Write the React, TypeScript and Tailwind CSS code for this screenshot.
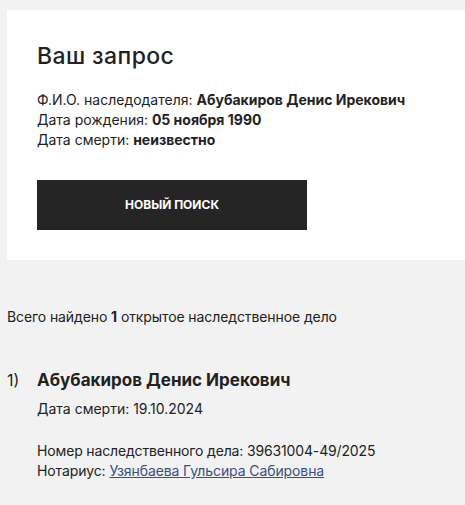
export default function App() {
  const font = { fontFamily: 'Inter, "Liberation Sans", Arial, sans-serif' };
  return (
    <div className="w-[465px] h-[505px] bg-[#f2f2f2] overflow-hidden text-[#222222]" style={font}>
      <div className="ml-[7px] mt-[10px] bg-white pl-[30px] pt-[32px] pb-[30px]">
        <h1 className="text-[23px] leading-[28px] font-medium tracking-[0.4px]">Ваш запрос</h1>
        <div className="mt-[20px] text-[14px] leading-[20px]">
          <div>Ф.И.О. наследодателя: <b>Абубакиров Денис Ирекович</b></div>
          <div>Дата рождения: <b>05 ноября 1990</b></div>
          <div>Дата смерти: <b>неизвестно</b></div>
        </div>
        <button className="mt-[30px] w-[270px] h-[50px] bg-[#252525] text-white text-[12px] font-bold uppercase flex items-center justify-center">
          Новый поиск
        </button>
      </div>
      <div className="ml-[7px] mt-[47px] text-[14px] leading-[20px] tracking-[-0.1px]">
        Всего найдено <b>1</b> открытое наследственное дело
      </div>
      <div className="mt-[41px] flex">
        <div className="w-[37px] pl-[7px] text-[16px] leading-[24px]">1)</div>
        <div className="flex-1">
          <div className="text-[17px] leading-[24px] font-bold">Абубакиров Денис Ирекович</div>
          <div className="mt-[7px] text-[14px] leading-[20px]">Дата смерти: 19.10.2024</div>
          <div className="mt-[22px] text-[14px] leading-[20px] tracking-[-0.15px]">Номер наследственного дела: 39631004-49/2025</div>
          <div className="text-[14px] leading-[20px] tracking-[-0.1px]">
            Нотариус: <a href="#" className="underline text-[#3b4e7e]">Узянбаева Гульсира Сабировна</a>
          </div>
        </div>
      </div>
    </div>
  );
}
